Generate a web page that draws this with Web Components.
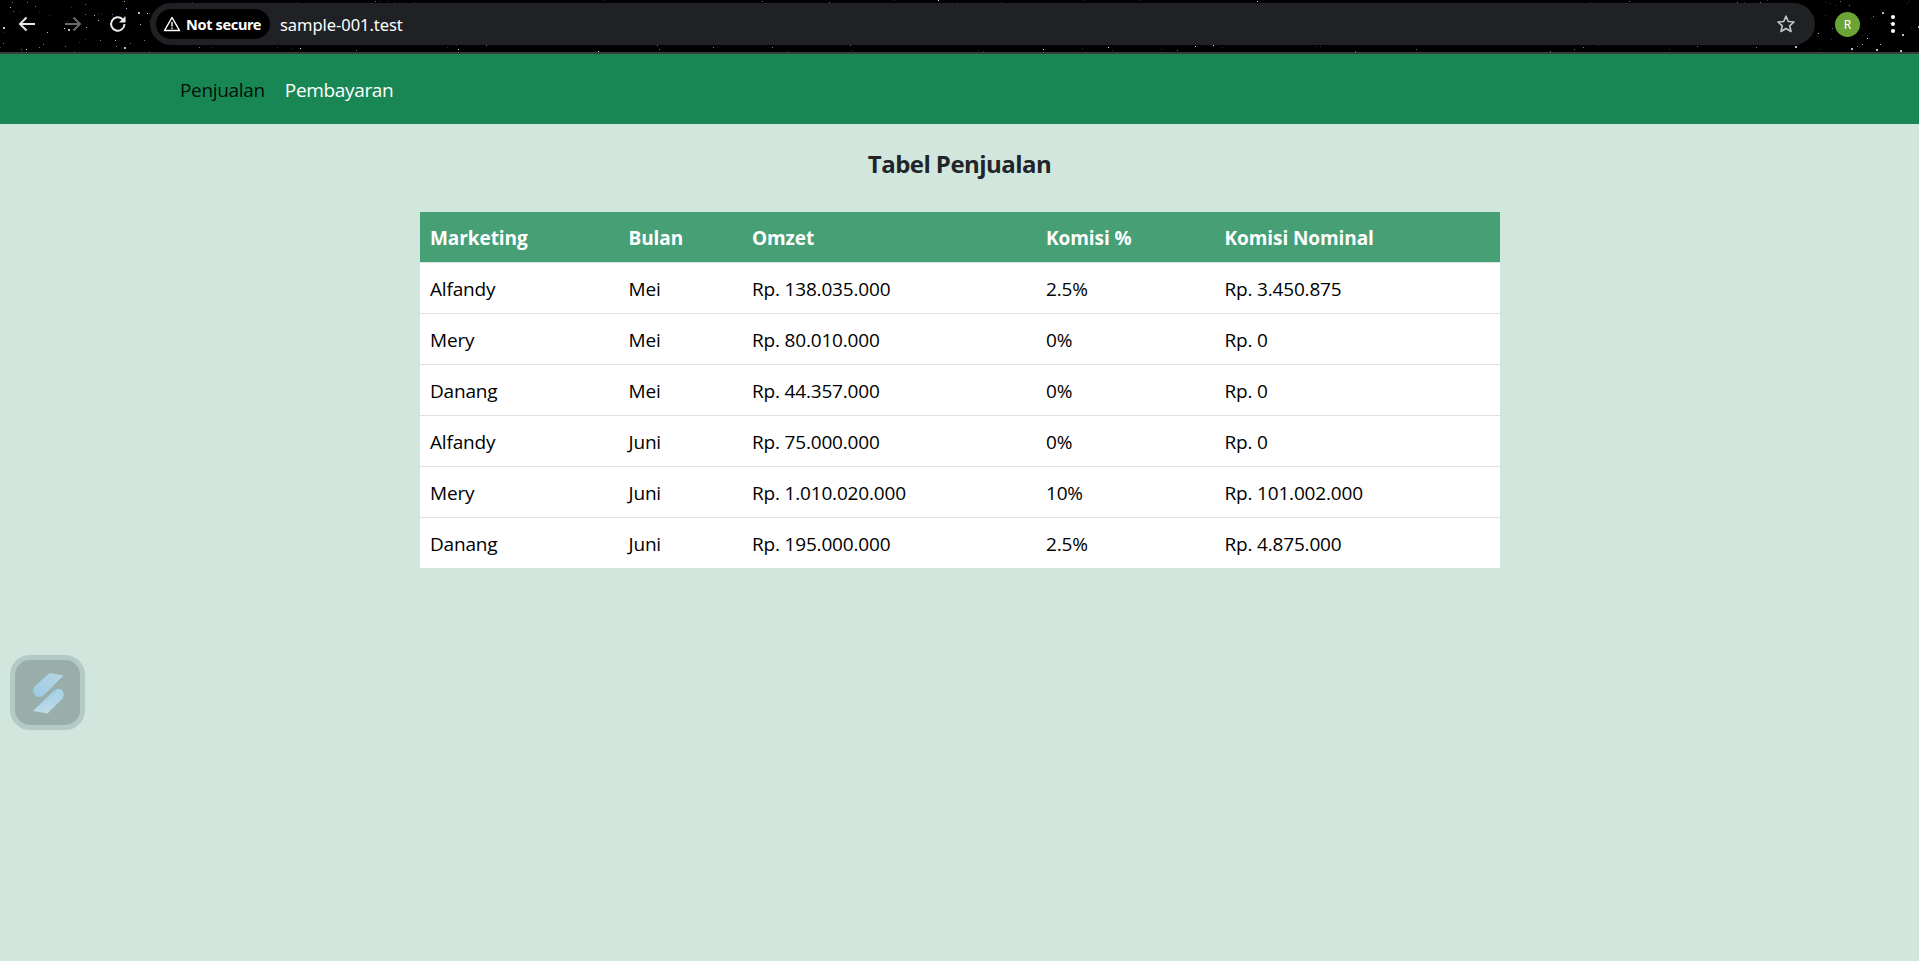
<!DOCTYPE html>
<html lang="id"><head><meta charset="utf-8"><title>Tabel Penjualan</title>
<style>
html,body{margin:0;height:100%}
body{background:#d1e7dd;font-family:"Open Sans","Noto Sans",sans-serif;color:#212529;overflow:hidden}
</style></head><body>
<browser-bar url="sample-001.test"></browser-bar>
<app-nav><nav-link active>Penjualan</nav-link><nav-link>Pembayaran</nav-link></app-nav>
<sales-page heading="Tabel Penjualan">
  <sales-row head><span>Marketing</span><span>Bulan</span><span>Omzet</span><span>Komisi %</span><span>Komisi Nominal</span></sales-row>
  <sales-row><span>Alfandy</span><span>Mei</span><span>Rp. 138.035.000</span><span>2.5%</span><span>Rp. 3.450.875</span></sales-row>
  <sales-row><span>Mery</span><span>Mei</span><span>Rp. 80.010.000</span><span>0%</span><span>Rp. 0</span></sales-row>
  <sales-row><span>Danang</span><span>Mei</span><span>Rp. 44.357.000</span><span>0%</span><span>Rp. 0</span></sales-row>
  <sales-row><span>Alfandy</span><span>Juni</span><span>Rp. 75.000.000</span><span>0%</span><span>Rp. 0</span></sales-row>
  <sales-row><span>Mery</span><span>Juni</span><span>Rp. 1.010.020.000</span><span>10%</span><span>Rp. 101.002.000</span></sales-row>
  <sales-row last><span>Danang</span><span>Juni</span><span>Rp. 195.000.000</span><span>2.5%</span><span>Rp. 4.875.000</span></sales-row>
</sales-page>
<float-widget></float-widget>
<script>
function stars(){
  let s=7,out='';const r=()=>(s=(s*16807)%2147483647)/2147483647;
  for(let i=0;i<420;i++){
    const x=Math.floor(r()*1919),y=Math.floor(r()*52);
    if(y>=3&&y<45&&x>150&&x<1815){r();continue}
    const c=r();const fill=c>.9?'#dfe7f5':c>.55?'#5f79a8':'#27314a';
    out+=`<rect x="${x}" y="${y}" width="1" height="1" fill="${fill}"/>`;
  }
  for(const [x,y,w] of [[1795,46,2],[1818,33,1],[1882,12,2],[1902,34,2],[1918,26,2],[1851,48,2],[1876,49,2],[1862,44,1],[1900,50,2],[1880,44,1],[10,7,1],[3,27,2],[94,15,1],[98,20,1],[86,27,1],[68,29,2],[47,32,1],[124,1,1],[126,8,1],[138,12,2],[140,24,1],[124,47,2],[115,40,1]])
    out+=`<rect x="${x}" y="${y}" width="${w}" height="${w}" fill="#a9bfe3"/>`;
  return out;
}
class BrowserBar extends HTMLElement{connectedCallback(){
  this.attachShadow({mode:'open'}).innerHTML=`<style>
  :host{display:block;height:54px;box-sizing:border-box;background:#000;border-bottom:2px solid #3c3c3c;position:relative;font-family:"Noto Sans","Open Sans",sans-serif;color:#fff}
  .sky{position:absolute;inset:0}
  .row{position:relative;display:flex;align-items:center;height:52px;padding-bottom:4px;box-sizing:border-box}
  .nav{display:flex;width:150px;flex:none}
  .nav svg{width:24px;height:24px;flex:none}
  .omni{flex:none;width:1665px;height:42px;border-radius:21px;background:#202124;display:flex;align-items:center;padding:0 6px;box-sizing:border-box}
  .pill{flex:none;height:30px;width:114px;border-radius:15px;background:#000;display:flex;align-items:center;gap:5px;padding-left:7px;box-sizing:border-box;font-size:14.5px;font-weight:700;letter-spacing:-.35px;white-space:nowrap}
  .url{margin-left:10px;font-size:16.5px;flex:1;letter-spacing:-.05px}
  .star{flex:none;margin-right:13px}
  .av{flex:none;width:25px;height:25px;border-radius:50%;background:#6aa434;margin-left:20px;font-size:12px;display:flex;align-items:center;justify-content:center}
  .dots{flex:none;margin-left:30px}
  </style>
  <svg class="sky" width="1919" height="52" aria-hidden="true">${stars()}</svg>
  <div class="row">
   <div class="nav">
    <svg viewBox="0 0 24 24" style="margin-left:15px;margin-right:22px"><path d="M20 12H5M11.500 5.500 5 12l6.500 6.500" fill="none" stroke="#e8eaed" stroke-width="2"/></svg>
    <svg viewBox="0 0 24 24" style="margin-right:21px"><path d="M4 12h15M12.500 5.500 19 12l-6.500 6.500" fill="none" stroke="#6b6b6b" stroke-width="2"/></svg>
    <svg viewBox="0 0 24 24"><path d="M18.500 12a6.700 6.700 0 1 1-2-4.800L19 9.500" fill="none" stroke="#e8eaed" stroke-width="2"/><path d="M19.500 4v6.500H13z" fill="#e8eaed"/></svg>
   </div>
   <div class="omni">
    <div class="pill"><svg width="18" height="18" viewBox="0 0 18 18"><path d="M9 2.500 16.500 15.500H1.500Z" fill="none" stroke="#fff" stroke-width="1.500" stroke-linejoin="round"/><path d="M9 7v4.500M9 12.500v1.500" stroke="#fff" stroke-width="1.400"/></svg><span>Not secure</span></div>
    <span class="url">${this.getAttribute('url')}</span>
    <svg class="star" width="20" height="20" viewBox="0 0 20 20"><path d="M10 2.200 12.300 7.500 18 8 13.700 11.800 15 17.500 10 14.500 5 17.500 6.300 11.800 2 8 7.700 7.500Z" fill="none" stroke="#c4c7c5" stroke-width="1.600" stroke-linejoin="round"/></svg>
   </div>
   <div class="av">R</div>
   <svg class="dots" width="6" height="20" viewBox="0 0 6 20"><circle cx="3" cy="3" r="2" fill="#fff"/><circle cx="3" cy="10" r="2" fill="#fff"/><circle cx="3" cy="17" r="2" fill="#fff"/></svg>
  </div>`;
}}
class AppNav extends HTMLElement{constructor(){super();this.attachShadow({mode:'open'}).innerHTML=`<style>
  :host{display:flex;align-items:center;height:70px;background:#198754;padding:2px 0 0 170px;box-sizing:border-box}
  </style><slot></slot>`}}
class NavLink extends HTMLElement{constructor(){super();this.attachShadow({mode:'open'}).innerHTML=`<style>
  :host{display:block;padding:0 10px;font-size:19px;line-height:30px;color:#fff;letter-spacing:-.33px}
  :host([active]){color:rgba(0,0,0,.9)}
  </style><slot></slot>`}}
class SalesPage extends HTMLElement{connectedCallback(){this.attachShadow({mode:'open'}).innerHTML=`<style>
  :host{display:block;padding-top:25px}
  h3{margin:0 0 33px;text-align:center;font-size:24px;line-height:30px;font-weight:700;color:#212529;letter-spacing:-.55px}
  .t{width:1080px;margin:0 auto 0 420px;background:#fff}
  </style><h3>${this.getAttribute('heading')}</h3><div class="t" role="table"><slot></slot></div>`}}
class SalesRow extends HTMLElement{constructor(){super();this.attachShadow({mode:'open'}).innerHTML=`<style>
  :host{display:grid;grid-template-columns:198.500px 123.500px 294px 178.500px 285.500px;box-sizing:border-box;height:51px;padding-top:2px;align-items:center;font-size:19px;color:#000;border-bottom:1px solid #dee2e6;letter-spacing:-.18px}
  :host([head]){background:#479f76;color:#fff;font-weight:700;letter-spacing:-.08px}
  :host([last]){border-bottom:0;height:50px}
  ::slotted(span){padding-left:10px;white-space:nowrap}
  </style><slot></slot>`}}
class FloatWidget extends HTMLElement{constructor(){super();this.attachShadow({mode:'open'}).innerHTML=`<style>
  :host{position:fixed;left:10px;top:655px;width:75px;height:75px;box-sizing:border-box;border:5px solid #b3cbc4;border-radius:20px;background:#99adaa;display:flex;align-items:center;justify-content:center}
  </style><svg width="36" height="44" viewBox="30 670 36 44"><defs>
  <linearGradient id="a" x1="0" y1="1" x2="1" y2="0"><stop offset="0" stop-color="#9ccbe4"/><stop offset="1" stop-color="#b6d6e3"/></linearGradient>
  <linearGradient id="b" x1="1" y1="0" x2="0" y2="1"><stop offset="0" stop-color="#9ccbe4"/><stop offset="1" stop-color="#bcdbe8"/></linearGradient></defs>
  <path d="M49.500 672 L63.500 674.500 L44 694 Q39 697.500 35 694.500 Q31 690 35 685 Z" fill="url(#a)"/>
  <path d="M33 710 L54 689.500 Q58.500 686.500 62 689 Q65.500 693 62.500 697.500 L47.500 712.500 Z" fill="url(#b)"/>
  <path d="M40 711 L58 688 Q61.500 688 62 689 Q65.500 693 62.500 697.500 L47.500 712.500 Z" fill="#fff" opacity=".1"/></svg>`}}
customElements.define('browser-bar',BrowserBar);
customElements.define('app-nav',AppNav);
customElements.define('nav-link',NavLink);
customElements.define('sales-page',SalesPage);
customElements.define('sales-row',SalesRow);
customElements.define('float-widget',FloatWidget);
</script>
</body></html>
